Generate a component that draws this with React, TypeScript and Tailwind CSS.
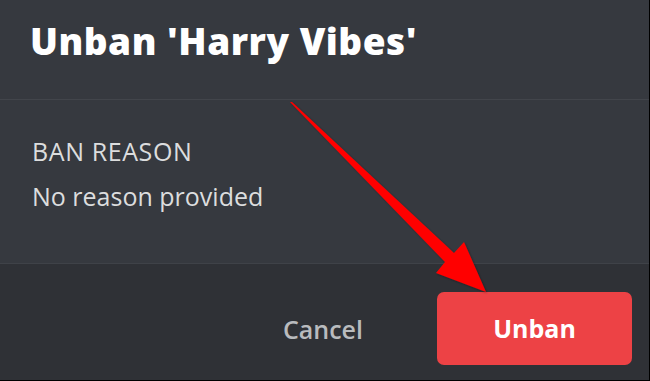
export default function App() {
  return (
    <main className="relative h-[381px] w-[650px] overflow-hidden bg-black font-['Open_Sans',sans-serif]">
      <div className="flex h-[380px] w-[649px] flex-col">
        {/* Header */}
        <header className="h-[100px] border-b border-[#42454b] bg-[#36393f] pl-[30px] pt-[19px]">
          <h1 className="text-[37px] font-extrabold leading-[44px] tracking-[0.5px] text-white">
            Unban 'Harry Vibes'
          </h1>
        </header>

        {/* Body */}
        <section className="flex h-[164px] flex-col gap-[13px] border-b border-[#3f4248] bg-[#36393f] pl-[32px] pt-[35px]">
          <p className="text-[25px] leading-[32px] tracking-[0.6px] text-[#dcddde]">BAN REASON</p>
          <p className="text-[25px] leading-[32px] text-[#dcddde]">No reason provided</p>
        </section>

        {/* Footer */}
        <footer className="flex flex-1 items-start justify-end gap-[74px] bg-[#2f3136] pr-[17px] pt-[28px]">
          <button className="mt-[21px] text-[25px] font-semibold leading-[32px] text-[#b9bbbe]">Cancel</button>
          <button className="flex h-[73px] w-[195px] items-center justify-center rounded-[7px] bg-[#ed4245] text-[25px] font-bold text-white">
            Unban
          </button>
        </footer>
      </div>

      {/* Red arrow annotation */}
      <svg className="pointer-events-none absolute left-0 top-0" width="650" height="381" viewBox="0 0 650 381">
        <defs>
          <filter id="s" x="-10%" y="-10%" width="120%" height="120%">
            <feDropShadow dx="1" dy="1" stdDeviation="1" floodColor="#000" floodOpacity="0.35" />
          </filter>
        </defs>
        <polygon
          points="290,102 292,102 454,253 464,242 486,292 436,273 445,262"
          fill="#ff0000"
          filter="url(#s)"
        />
      </svg>
    </main>
  )
}
